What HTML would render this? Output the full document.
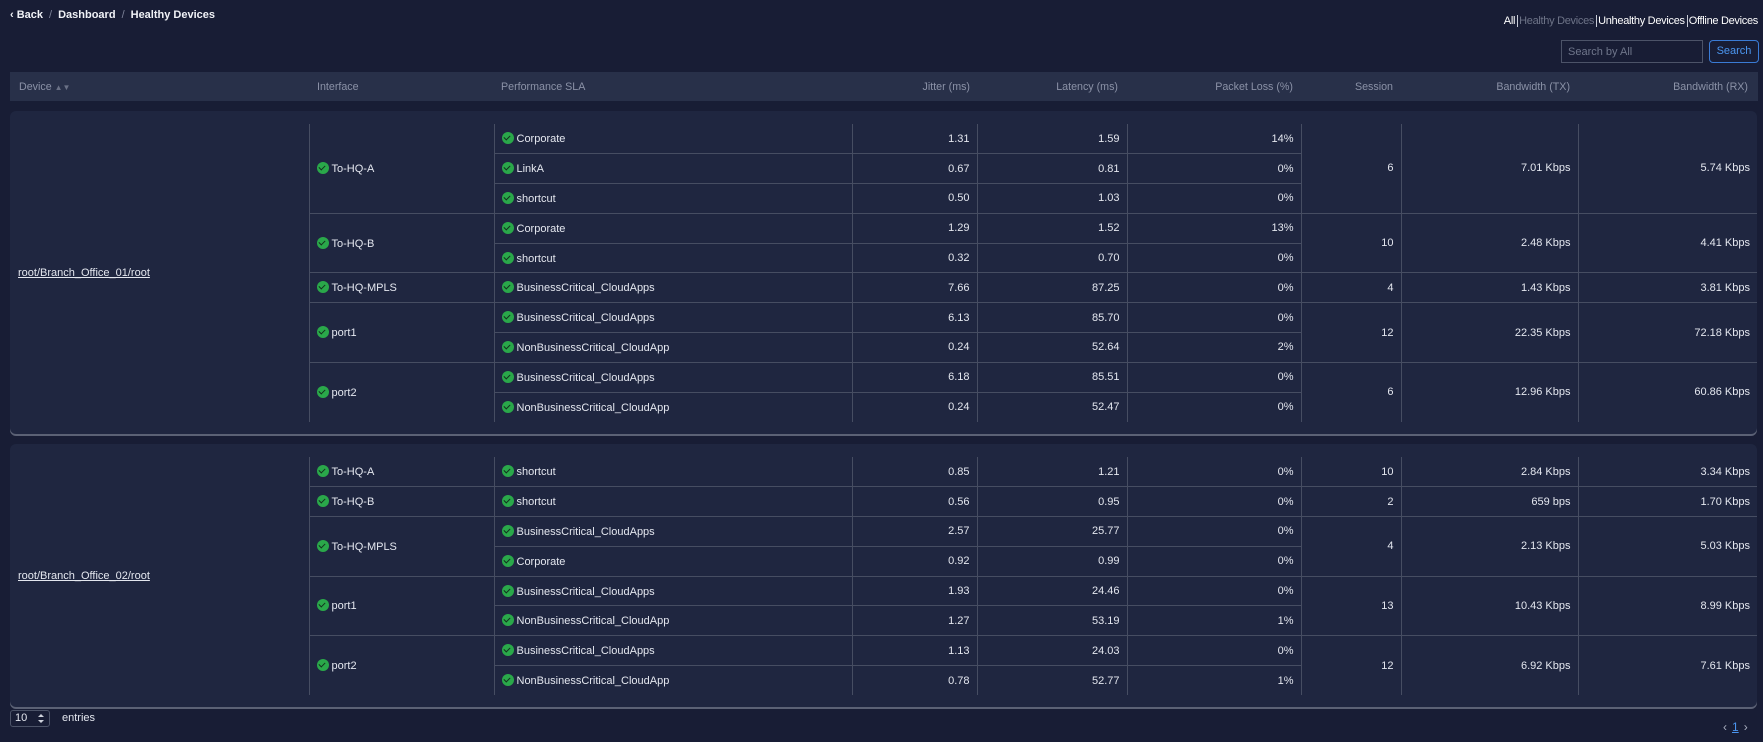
<!DOCTYPE html>
<html><head><meta charset="utf-8"><style>
*{box-sizing:border-box;margin:0;padding:0}
body{width:1763px;height:742px;background:#181d35;font-family:"Liberation Sans",sans-serif;color:#e4e7ef;font-size:11px;position:relative;overflow:hidden}
.bc{position:absolute;left:10px;top:9px;font-size:11px;font-weight:bold;color:#f0f2f7}
.bc .s{color:#7d8399;font-weight:normal;margin:0 6px}
.tabs{position:absolute;right:4px;top:15px;font-size:11px;white-space:nowrap;color:#fff;letter-spacing:-0.3px}
.tabs span{padding:0 1px;border-left:1px solid #c7cbd6;margin-left:1px}
.tabs span.f{border:none}
.tabs .g{color:#6d7387}
.inp{position:absolute;left:1561px;top:40px;width:142px;height:23px;border:1px solid #4c5368;color:#6f768b;font-size:11px;padding:5px 6px}
.btn{position:absolute;left:1709px;top:40px;width:50px;height:23px;border:1px solid #3a7bd5;border-radius:4px;color:#4b96f0;font-size:11px;text-align:center;line-height:21px}
.hd{position:absolute;left:10px;top:72px;width:1748px;height:29px;background:#283049;color:#8b92a7;font-size:10.7px}
.hd div{position:absolute;top:9px;white-space:nowrap}
.card{position:absolute;left:10px;width:1747px;background:#1f2640;border-radius:6px;box-shadow:0 2px 0 #5b6175}
table{position:absolute;left:0;border-collapse:collapse;table-layout:fixed;width:1747px}
td{border-left:1px solid #464d62;border-top:1px solid #464d62;padding:0 7px;white-space:nowrap;vertical-align:middle}
tr.first td{border-top:none}
td.dev{border:none;padding-left:8px}
td.dev a{color:#e4e7ef;text-decoration:underline}
td.r{text-align:right}
.ck{display:inline-block;width:12px;height:12px;border-radius:50%;background:#2aa84a;vertical-align:-2px;margin-right:3px;position:relative}
.ck:after{content:"";position:absolute;left:3.5px;top:2px;width:3px;height:5px;border:solid #13301d;border-width:0 1.5px 1.5px 0;transform:rotate(45deg)}
.sel{position:absolute;left:10px;top:710px;width:40px;height:17px;border:1px solid #4c5368;border-radius:3px;font-size:11px;padding:1px 4px;color:#e4e7ef}
.sel:after{content:"";position:absolute;right:5px;top:3px;border:3px solid transparent;border-bottom-color:#cfd3dc;border-top:none;}
.sel:before{content:"";position:absolute;right:5px;top:9px;border:3px solid transparent;border-top-color:#cfd3dc;border-bottom:none;}
.ent{position:absolute;left:62px;top:712px;font-size:11px}
.pg{position:absolute;left:1723px;top:720px;font-size:12px;color:#aab0c0}
.pg u{color:#4b96f0;margin:0 5px}
</style></head><body>
<div class="bc">&#8249; Back<span class="s">/</span>Dashboard<span class="s">/</span>Healthy Devices</div>
<div class="tabs"><span class="f">All</span><span class="g">Healthy Devices</span><span>Unhealthy Devices</span><span>Offline Devices</span></div>
<div class="inp">Search by All</div>
<div class="btn">Search</div>
<div class="hd">
<div style="left:9px">Device <span style="font-size:8px;color:#6a7186">▲▼</span></div>
<div style="left:307px">Interface</div>
<div style="left:491px">Performance SLA</div>
<div style="right:788px">Jitter (ms)</div>
<div style="right:640px">Latency (ms)</div>
<div style="right:465px">Packet Loss (%)</div>
<div style="right:365px">Session</div>
<div style="right:188px">Bandwidth (TX)</div>
<div style="right:10px">Bandwidth (RX)</div>
</div>

<div class="card" style="top:111px;height:323px">
<table style="top:13px">
<colgroup><col style="width:299px"><col style="width:185px"><col style="width:358px"><col style="width:125px"><col style="width:150px"><col style="width:174px"><col style="width:100px"><col style="width:177px"><col style="width:179px"></colgroup>
<tr class="first" style="height:29.8px"><td class="dev" rowspan="10"><a>root/Branch_Office_01/root</a></td><td rowspan="3"><i class="ck"></i>To-HQ-A</td><td><i class="ck"></i>Corporate</td><td class="r">1.31</td><td class="r">1.59</td><td class="r">14%</td><td class="r" rowspan="3">6</td><td class="r" rowspan="3">7.01 Kbps</td><td class="r" rowspan="3">5.74 Kbps</td></tr>
<tr style="height:29.8px"><td><i class="ck"></i>LinkA</td><td class="r">0.67</td><td class="r">0.81</td><td class="r">0%</td></tr>
<tr style="height:29.8px"><td><i class="ck"></i>shortcut</td><td class="r">0.50</td><td class="r">1.03</td><td class="r">0%</td></tr>
<tr style="height:29.8px"><td rowspan="2"><i class="ck"></i>To-HQ-B</td><td><i class="ck"></i>Corporate</td><td class="r">1.29</td><td class="r">1.52</td><td class="r">13%</td><td class="r" rowspan="2">10</td><td class="r" rowspan="2">2.48 Kbps</td><td class="r" rowspan="2">4.41 Kbps</td></tr>
<tr style="height:29.8px"><td><i class="ck"></i>shortcut</td><td class="r">0.32</td><td class="r">0.70</td><td class="r">0%</td></tr>
<tr style="height:29.8px"><td><i class="ck"></i>To-HQ-MPLS</td><td><i class="ck"></i>BusinessCritical_CloudApps</td><td class="r">7.66</td><td class="r">87.25</td><td class="r">0%</td><td class="r">4</td><td class="r">1.43 Kbps</td><td class="r">3.81 Kbps</td></tr>
<tr style="height:29.8px"><td rowspan="2"><i class="ck"></i>port1</td><td><i class="ck"></i>BusinessCritical_CloudApps</td><td class="r">6.13</td><td class="r">85.70</td><td class="r">0%</td><td class="r" rowspan="2">12</td><td class="r" rowspan="2">22.35 Kbps</td><td class="r" rowspan="2">72.18 Kbps</td></tr>
<tr style="height:29.8px"><td><i class="ck"></i>NonBusinessCritical_CloudApp</td><td class="r">0.24</td><td class="r">52.64</td><td class="r">2%</td></tr>
<tr style="height:29.8px"><td rowspan="2"><i class="ck"></i>port2</td><td><i class="ck"></i>BusinessCritical_CloudApps</td><td class="r">6.18</td><td class="r">85.51</td><td class="r">0%</td><td class="r" rowspan="2">6</td><td class="r" rowspan="2">12.96 Kbps</td><td class="r" rowspan="2">60.86 Kbps</td></tr>
<tr style="height:29.8px"><td><i class="ck"></i>NonBusinessCritical_CloudApp</td><td class="r">0.24</td><td class="r">52.47</td><td class="r">0%</td></tr>
</table>
</div>

<div class="card" style="top:444px;height:263px">
<table style="top:13px">
<colgroup><col style="width:299px"><col style="width:185px"><col style="width:358px"><col style="width:125px"><col style="width:150px"><col style="width:174px"><col style="width:100px"><col style="width:177px"><col style="width:179px"></colgroup>
<tr class="first" style="height:29.8px"><td class="dev" rowspan="8"><a>root/Branch_Office_02/root</a></td><td><i class="ck"></i>To-HQ-A</td><td><i class="ck"></i>shortcut</td><td class="r">0.85</td><td class="r">1.21</td><td class="r">0%</td><td class="r">10</td><td class="r">2.84 Kbps</td><td class="r">3.34 Kbps</td></tr>
<tr style="height:29.8px"><td><i class="ck"></i>To-HQ-B</td><td><i class="ck"></i>shortcut</td><td class="r">0.56</td><td class="r">0.95</td><td class="r">0%</td><td class="r">2</td><td class="r">659 bps</td><td class="r">1.70 Kbps</td></tr>
<tr style="height:29.8px"><td rowspan="2"><i class="ck"></i>To-HQ-MPLS</td><td><i class="ck"></i>BusinessCritical_CloudApps</td><td class="r">2.57</td><td class="r">25.77</td><td class="r">0%</td><td class="r" rowspan="2">4</td><td class="r" rowspan="2">2.13 Kbps</td><td class="r" rowspan="2">5.03 Kbps</td></tr>
<tr style="height:29.8px"><td><i class="ck"></i>Corporate</td><td class="r">0.92</td><td class="r">0.99</td><td class="r">0%</td></tr>
<tr style="height:29.8px"><td rowspan="2"><i class="ck"></i>port1</td><td><i class="ck"></i>BusinessCritical_CloudApps</td><td class="r">1.93</td><td class="r">24.46</td><td class="r">0%</td><td class="r" rowspan="2">13</td><td class="r" rowspan="2">10.43 Kbps</td><td class="r" rowspan="2">8.99 Kbps</td></tr>
<tr style="height:29.8px"><td><i class="ck"></i>NonBusinessCritical_CloudApp</td><td class="r">1.27</td><td class="r">53.19</td><td class="r">1%</td></tr>
<tr style="height:29.8px"><td rowspan="2"><i class="ck"></i>port2</td><td><i class="ck"></i>BusinessCritical_CloudApps</td><td class="r">1.13</td><td class="r">24.03</td><td class="r">0%</td><td class="r" rowspan="2">12</td><td class="r" rowspan="2">6.92 Kbps</td><td class="r" rowspan="2">7.61 Kbps</td></tr>
<tr style="height:29.8px"><td><i class="ck"></i>NonBusinessCritical_CloudApp</td><td class="r">0.78</td><td class="r">52.77</td><td class="r">1%</td></tr>
</table>
</div>

<div class="sel">10</div>
<div class="ent">entries</div>
<div class="pg">&#8249;<u>1</u>&#8250;</div>
</body></html>
